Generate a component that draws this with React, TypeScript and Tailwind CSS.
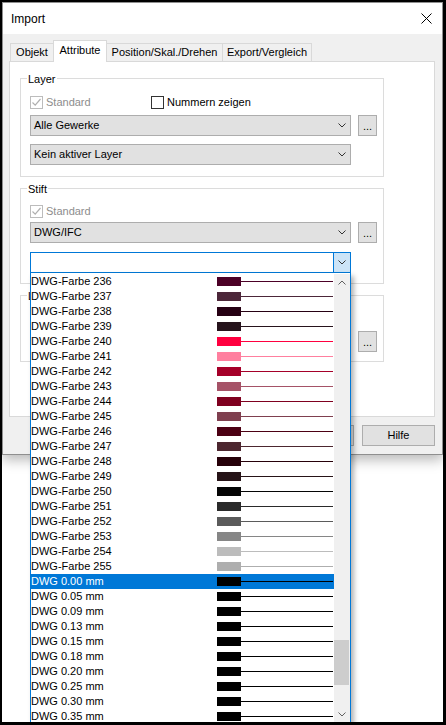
import React from "react";

type Row = { label: string; swatch: string; line: string; selected?: boolean };

const rows: Row[] = [
  { label: "DWG-Farbe 236", swatch: "bg-[#4c0026]", line: "bg-[#4c0026]" },
  { label: "DWG-Farbe 237", swatch: "bg-[#4c2639]", line: "bg-[#4c2639]" },
  { label: "DWG-Farbe 238", swatch: "bg-[#260013]", line: "bg-[#260013]" },
  { label: "DWG-Farbe 239", swatch: "bg-[#26131c]", line: "bg-[#26131c]" },
  { label: "DWG-Farbe 240", swatch: "bg-[#ff003f]", line: "bg-[#ff003f]" },
  { label: "DWG-Farbe 241", swatch: "bg-[#ff7f9f]", line: "bg-[#ff7f9f]" },
  { label: "DWG-Farbe 242", swatch: "bg-[#a50029]", line: "bg-[#a50029]" },
  { label: "DWG-Farbe 243", swatch: "bg-[#a55267]", line: "bg-[#a55267]" },
  { label: "DWG-Farbe 244", swatch: "bg-[#7f001f]", line: "bg-[#7f001f]" },
  { label: "DWG-Farbe 245", swatch: "bg-[#7f3f4f]", line: "bg-[#7f3f4f]" },
  { label: "DWG-Farbe 246", swatch: "bg-[#4c0013]", line: "bg-[#4c0013]" },
  { label: "DWG-Farbe 247", swatch: "bg-[#4c262f]", line: "bg-[#4c262f]" },
  { label: "DWG-Farbe 248", swatch: "bg-[#260009]", line: "bg-[#260009]" },
  { label: "DWG-Farbe 249", swatch: "bg-[#261317]", line: "bg-[#261317]" },
  { label: "DWG-Farbe 250", swatch: "bg-[#050505]", line: "bg-[#050505]" },
  { label: "DWG-Farbe 251", swatch: "bg-[#2a2a2a]", line: "bg-[#2a2a2a]" },
  { label: "DWG-Farbe 252", swatch: "bg-[#5b5b5b]", line: "bg-[#5b5b5b]" },
  { label: "DWG-Farbe 253", swatch: "bg-[#868686]", line: "bg-[#868686]" },
  { label: "DWG-Farbe 254", swatch: "bg-[#bcbcbc]", line: "bg-[#bcbcbc]" },
  { label: "DWG-Farbe 255", swatch: "bg-[#aeaeae]", line: "bg-[#aeaeae]" },
  { label: "DWG 0.00 mm", swatch: "bg-black", line: "bg-black", selected: true },
  { label: "DWG 0.05 mm", swatch: "bg-black", line: "bg-black" },
  { label: "DWG 0.09 mm", swatch: "bg-black", line: "bg-black" },
  { label: "DWG 0.13 mm", swatch: "bg-black", line: "bg-black" },
  { label: "DWG 0.15 mm", swatch: "bg-black", line: "bg-black" },
  { label: "DWG 0.18 mm", swatch: "bg-black", line: "bg-black" },
  { label: "DWG 0.20 mm", swatch: "bg-black", line: "bg-black" },
  { label: "DWG 0.25 mm", swatch: "bg-black", line: "bg-black" },
  { label: "DWG 0.30 mm", swatch: "bg-black", line: "bg-black" },
  { label: "DWG 0.35 mm", swatch: "bg-black", line: "bg-black" },
];

const Chevron = ({ up = false, className = "" }: { up?: boolean; className?: string }) => (
  <svg width="8" height="5" viewBox="0 0 8 5" className={className}>
    <path d={up ? "M0.5 4.5 L4 1 L7.5 4.5" : "M0.5 0.5 L4 4 L7.5 0.5"} fill="none" stroke="currentColor" strokeWidth="1" />
  </svg>
);

const Combo = ({ text = "", open = false }: { text?: string; open?: boolean }) => (
  <div
    className={`flex h-[21px] w-[321px] items-stretch border ${
      open ? "border-[#0078d7] bg-white" : "border-[#adadad] bg-[#e1e1e1]"
    }`}
  >
    <span className="flex-1 pl-[3px] leading-[19px]">{text}</span>
    <span
      className={`flex w-[17px] items-center justify-center text-[#333] ${
        open ? "border-l border-[#0078d7] bg-[#cce4f7]" : ""
      }`}
    >
      <Chevron />
    </span>
  </div>
);

const Dots = () => (
  <button className="flex h-[21px] w-[19px] items-end justify-center border border-[#adadad] bg-[#e1e1e1] pb-[3px] leading-none">
    ...
  </button>
);

const Check = ({ label, disabled = false, checked = false }: { label: string; disabled?: boolean; checked?: boolean }) => (
  <div className="flex items-center gap-[3px]">
    <span
      className={`flex h-[13px] w-[13px] items-center justify-center border bg-white ${
        disabled ? "border-[#bcbcbc]" : "border-[#333]"
      }`}
    >
      {checked && (
        <svg width="11" height="11" viewBox="0 0 11 11">
          <path d="M1.5 5.5 L4.2 8.2 L9.5 2" fill="none" stroke="#b0b0b0" strokeWidth="1.2" />
        </svg>
      )}
    </span>
    <span className={disabled ? "text-[#8d8d8d]" : ""}>{label}</span>
  </div>
);

const Group = ({ title, className = "", children }: { title: string; className?: string; children: React.ReactNode }) => (
  <div className={`relative w-[364px] border border-[#dcdcdc] pl-[9px] ${className}`}>
    <span className="absolute -top-[7px] left-[6px] bg-white px-[1px] leading-[14px]">{title}</span>
    {children}
  </div>
);

const Dialog = () => (
  <div className="flex h-[453px] w-[441px] flex-col border border-[#8f8f8f] shadow-[0_5px_12px_rgba(0,0,0,0.28)]">
    {/* Title bar */}
    <div className="flex h-[31px] items-center justify-between bg-white pl-[8px] pr-[10px]">
      <span className="text-[12px]">Import</span>
      <svg width="11" height="11" viewBox="0 0 11 11">
        <path d="M0.5 0.5 L10.5 10.5 M10.5 0.5 L0.5 10.5" stroke="#000" strokeWidth="1" />
      </svg>
    </div>

    <div className="flex-1 bg-[#f0f0f0] pl-[6px] pt-[7px]">
      {/* Tabs */}
      <div className="flex h-[20px] items-end pl-[1px]">
        <div className="flex h-[18px] w-[44px] items-center justify-center border border-b-0 border-[#d9d9d9] bg-[#f0f0f0]">Objekt</div>
        <div className="relative z-10 -mb-px -ml-px flex h-[22px] w-[54px] items-center justify-center border border-b-0 border-[#d9d9d9] bg-white pb-[3px]">
          Attribute
        </div>
        <div className="-ml-px flex h-[18px] w-[117px] items-center justify-center border border-b-0 border-[#d9d9d9] bg-[#f0f0f0]">
          Position/Skal./Drehen
        </div>
        <div className="-ml-px flex h-[18px] w-[90px] items-center justify-center border border-b-0 border-[#d9d9d9] bg-[#f0f0f0]">
          Export/Vergleich
        </div>
      </div>

      {/* Panel */}
      <div className="h-[356px] w-[426px] border border-[#d9d9d9] bg-white pl-[10px] pt-[16px]">
        <Group title="Layer" className="pb-[11px] pt-[16px]">
          <div className="flex h-[14px] items-center">
            <div className="w-[121px]">
              <Check label="Standard" disabled checked />
            </div>
            <Check label="Nummern zeigen" />
          </div>
          <div className="mt-[6px] flex gap-[7px]">
            <Combo text="Alle Gewerke" />
            <Dots />
          </div>
          <div className="mt-[8px]">
            <Combo text="Kein aktiver Layer" />
          </div>
        </Group>

        <Group title="Stift" className="mt-[11px] pb-[10px] pt-[16px]">
          <div className="flex h-[12px] items-center">
            <Check label="Standard" disabled checked />
          </div>
          <div className="mt-[5px] flex gap-[7px]">
            <Combo text="DWG/IFC" />
            <Dots />
          </div>
          <div className="mt-[9px]">
            <Combo open />
          </div>
        </Group>

        <Group title="Linie" className="mt-[11px] pb-[9px] pt-[35px]">
          <div className="flex gap-[7px]">
            <Combo text="" />
            <Dots />
          </div>
        </Group>
      </div>

      {/* Buttons */}
      <div className="mt-[8px] flex justify-end gap-[8px] pr-[7px]">
        <button className="h-[21px] w-[73px] border border-[#adadad] bg-[#e1e1e1]">Abbrechen</button>
        <button className="h-[21px] w-[73px] border border-[#adadad] bg-[#e1e1e1]">Hilfe</button>
      </div>
    </div>
  </div>
);

const DropList = () => (
  <div className="absolute left-[28px] top-[271px] z-20 flex h-[450px] w-[321px] border-x border-[#0078d7] bg-white pt-px shadow-[3px_3px_5px_rgba(0,0,0,0.3)]">
    <div className="flex w-[303px] flex-col">
      {rows.map((r) => (
        <div key={r.label} className={`flex h-[15px] shrink-0 items-center ${r.selected ? "bg-[#0078d7] text-white" : ""}`}>
          <span className="w-[186px] leading-[15px]">{r.label}</span>
          <span className={`h-[9px] w-[24px] ${r.swatch}`} />
          <span className={`h-px w-[92px] ${r.line}`} />
        </div>
      ))}
    </div>
    <div className="flex w-[16px] flex-col bg-[#f0f0f0]">
      <div className="flex h-[17px] items-center justify-center text-[#606060]">
        <Chevron up />
      </div>
      <div className="flex-1">
        <div className="mt-[349px] h-[45px] w-[15px] bg-[#cdcdcd]" />
      </div>
      <div className="flex h-[17px] items-center justify-center text-[#606060]">
        <Chevron />
      </div>
    </div>
  </div>
);

export default function App() {
  return (
    <div className="relative h-[725px] w-[446px] overflow-hidden border-b-[3px] border-l-2 border-r-[3px] border-t-2 border-black bg-white font-['Liberation_Sans',Arial,sans-serif] text-[11px] text-black">
      <Dialog />
      <DropList />
    </div>
  );
}
